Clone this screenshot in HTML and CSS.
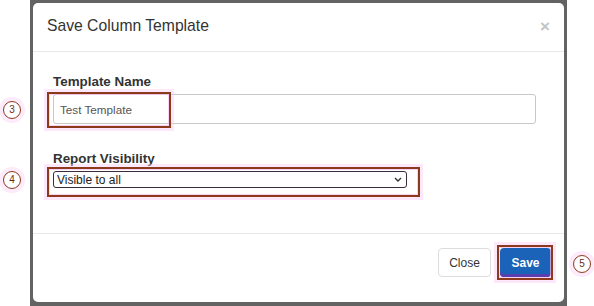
FILE: index.html
```html
<!DOCTYPE html>
<html lang="en">
<head>
    <meta charset="UTF-8">
    <meta name="viewport" content="width=device-width, initial-scale=1.0">
    <title>Save Column Template</title>
    <link rel="stylesheet" href="styles.css">
</head>
<body>

    <div class="page">
        <div class="frame">
            <div class="modal">
                <div class="modal-header">
                    <h4 class="modal-title">Save Column Template</h4>
                    <button type="button" class="close">&times;</button>
                </div>
                <div class="modal-body">
                    <div class="form-group">
                        <label for="templateName">Template Name</label>
                        <input type="text" id="templateName" class="form-control" value="Test Template">
                    </div>
                    <div class="form-group">
                        <label for="visibility">Report Visibility</label>
                        <select id="visibility" class="visibility">
                            <option>Visible to all</option>
                            <option>Only me</option>
                        </select>
                    </div>
                </div>
                <div class="modal-footer">
                    <button type="button" class="btn btn-default">Close</button>
                    <button type="button" class="btn btn-primary">Save</button>
                </div>
            </div>
        </div>

        <!-- annotation overlays -->
        <div class="hilite hilite-name"></div>
        <div class="hilite hilite-visibility"></div>
        <div class="hilite hilite-save"></div>
        <span class="step step-3">3</span>
        <span class="step step-4">4</span>
        <span class="step step-5">5</span>
    </div>

</body>
</html>
```

FILE: styles.css
```css
body {
    margin: 0;
    background-color: #fff;
    font-family: "Liberation Sans", Arial, sans-serif;
    color: #333;
}
.page {
    position: relative;
    width: 594px;
    height: 306px;
    overflow: hidden;
}
.frame {
    box-sizing: border-box;
    margin-left: 30px;
    width: 537px;
    height: 306px;
    padding: 3px 3px 4px 3px;
    background-color: #636363;
}
.modal {
    display: flex;
    flex-direction: column;
    height: 100%;
    background-color: #fff;
    border-radius: 5px;
}
.modal-header {
    box-sizing: border-box;
    display: flex;
    align-items: flex-start;
    height: 49px;
    padding: 14px 14px 0 14px;
    border-bottom: 1px solid #e8e8e8;
}
.modal-title {
    margin: 0;
    font-size: 15.7px;
    font-weight: normal;
    line-height: 1.1;
    color: #333;
}
.close {
    margin-left: auto;
    margin-top: 1px;
    padding: 0;
    border: none;
    background: none;
    font-family: "Liberation Sans", Arial, sans-serif;
    font-size: 17px;
    font-weight: bold;
    line-height: 1;
    color: #c4c4c4;
    cursor: pointer;
}
.modal-body {
    padding: 20px 0 0 20px;
}
.form-group {
    margin-bottom: 25px;
}
.form-group label {
    display: block;
    margin-bottom: 3px;
    font-size: 13.4px;
    font-weight: bold;
    line-height: 19px;
    color: #333;
}
.form-control {
    box-sizing: border-box;
    display: block;
    width: 483px;
    height: 30px;
    padding: 0 6px;
    border: 1px solid #c8c8c8;
    border-radius: 3px;
    font-family: "Liberation Sans", Arial, sans-serif;
    font-size: 11.7px;
    color: #555;
}
.visibility {
    box-sizing: border-box;
    display: block;
    width: 354px;
    height: 17px;
    padding: 0 3px;
    border: 1.5px solid #3b2b3b;
    border-radius: 3px;
    font-family: "Liberation Sans", Arial, sans-serif;
    font-size: 12px;
    color: #222;
    background-color: #fff;
    background-image: url("data:image/svg+xml,%3Csvg xmlns='http://www.w3.org/2000/svg' width='8' height='5' viewBox='0 0 8 5'%3E%3Cpath d='M1 1l3 3 3-3' fill='none' stroke='%23333' stroke-width='1.4'/%3E%3C/svg%3E");
    background-repeat: no-repeat;
    background-position: right 4px center;
    -webkit-appearance: none;
    appearance: none;
}
.modal-footer {
    box-sizing: border-box;
    display: flex;
    justify-content: flex-end;
    align-items: flex-start;
    gap: 9px;
    height: 69px;
    margin-top: auto;
    padding: 14px 13px 0 0;
    border-top: 1px solid #e8e8e8;
}
.btn {
    box-sizing: border-box;
    height: 29px;
    border-radius: 4px;
    font-family: "Liberation Sans", Arial, sans-serif;
    font-size: 12px;
    cursor: pointer;
}
.btn-default {
    width: 53px;
    border: 1px solid #ddd;
    background-color: #fff;
    color: #333;
}
.btn-primary {
    width: 51px;
    margin-top: 0;
    border: none;
    background-color: #1a63b8;
    box-shadow: inset 0 -3px 0 #5a3fae;
    color: #fff;
    font-weight: bold;
}

/* annotation overlays */
.hilite {
    position: absolute;
    box-sizing: border-box;
    border: 2px solid #8c3a1c;
    box-shadow: 0 0 0 3px rgba(249, 205, 243, 0.45), inset 0 0 0 1px rgba(249, 190, 240, 0.7);
}
.hilite-name {
    left: 47px;
    top: 92px;
    width: 124px;
    height: 36px;
}
.hilite-visibility {
    left: 47px;
    top: 167px;
    width: 373px;
    height: 30px;
}
.hilite-save {
    left: 497px;
    top: 245px;
    width: 56px;
    height: 35px;
}
.step {
    position: absolute;
    box-sizing: border-box;
    width: 18px;
    height: 18px;
    border: 1.5px solid #8c3a1c;
    border-radius: 50%;
    background-color: #fff;
    box-shadow: 0 0 0 4px #fdeafa;
    font-size: 10px;
    line-height: 15px;
    text-align: center;
    color: #6b2d15;
}
.step-3 {
    left: 3px;
    top: 101px;
}
.step-4 {
    left: 3px;
    top: 171px;
}
.step-5 {
    left: 573px;
    top: 255px;
}
```
